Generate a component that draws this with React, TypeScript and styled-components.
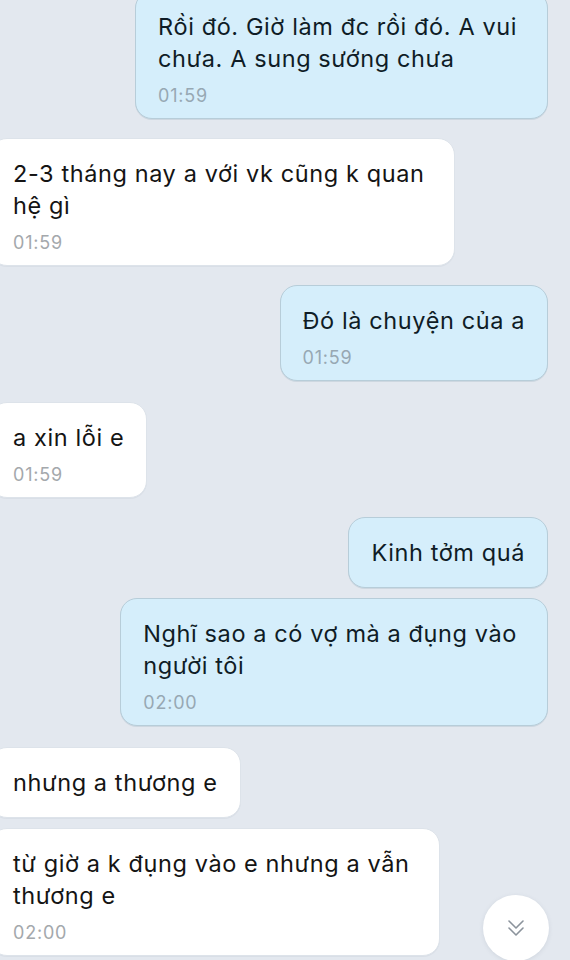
import React from "react";
import styled, { createGlobalStyle } from "styled-components";

const Global = createGlobalStyle`
  html, body {
    margin: 0;
    padding: 0;
    background: #e3e8ef;
    overflow: hidden;
  }
  body {
    width: 570px;
    height: 960px;
    font-family: Inter, Roboto, "Noto Sans", "Liberation Sans", sans-serif;
    -webkit-font-smoothing: antialiased;
  }
`;

const Screen = styled.div`
  position: relative;
  width: 570px;
  height: 960px;
  overflow: hidden;
  background: #e3e8ef;
`;

const MessageList = styled.div`
  display: flex;
  flex-direction: column;
  margin: -9px 22px 0 -10px;
`;

type Side = "in" | "out";

const Bubble = styled.div<{ $side: Side; $gap: number; $hasTime: boolean; $wrapped: boolean }>`
  box-sizing: border-box;
  align-self: ${(p) => (p.$side === "out" ? "flex-end" : "flex-start")};
  width: fit-content;
  margin-top: ${(p) => p.$gap}px;
  padding: 19px ${(p) => (p.$wrapped ? 30 : 22)}px ${(p) => (p.$hasTime ? 11 : 18)}px 22px;
  border-radius: 17px;
  background: ${(p) => (p.$side === "out" ? "#d5eefb" : "#ffffff")};
  border: 1px solid ${(p) => (p.$side === "out" ? "#b7cdd9" : "#dde3ea")};
  box-shadow: 0 1px 0 ${(p) => (p.$side === "out" ? "rgba(140,165,180,0.25)" : "rgba(180,190,200,0.2)")};
`;

const Line = styled.span<{ $side: Side }>`
  display: block;
  white-space: nowrap;
  font-size: 23.5px;
  letter-spacing: 0.6px;
  line-height: 32px;
  color: ${(p) => (p.$side === "out" ? "#0f1c26" : "#141414")};
`;

const Time = styled.div<{ $side: Side }>`
  margin-top: 10px;
  font-size: 18px;
  letter-spacing: 0.8px;
  line-height: 22px;
  color: ${(p) => (p.$side === "out" ? "#97a8b3" : "#a4a8ac")};
`;

const ScrollButton = styled.div`
  position: absolute;
  left: 483px;
  top: 895px;
  width: 66px;
  height: 66px;
  border-radius: 50%;
  background: #ffffff;
  box-shadow: 0 1px 4px rgba(120, 135, 150, 0.18);
  display: flex;
  align-items: center;
  justify-content: center;
`;

const ChevronIcon = () => (
  <svg width="20" height="20" viewBox="0 0 20 20" fill="none">
    <polyline points="3,3 10,10 17,3" stroke="#8b939c" strokeWidth="1.6" strokeLinecap="round" strokeLinejoin="round" />
    <polyline points="3,10 10,17 17,10" stroke="#8b939c" strokeWidth="1.6" strokeLinecap="round" strokeLinejoin="round" />
  </svg>
);

type Msg = { side: Side; lines: string[]; time?: string; gap: number };

const messages: Msg[] = [
  { side: "out", lines: ["Rồi đó. Giờ làm đc rồi đó. A vui", "chưa. A sung sướng chưa"], time: "01:59", gap: 0 },
  { side: "in", lines: ["2-3 tháng nay a với vk cũng k quan", "hệ gì"], time: "01:59", gap: 19 },
  { side: "out", lines: ["Đó là chuyện của a"], time: "01:59", gap: 19 },
  { side: "in", lines: ["a xin lỗi e"], time: "01:59", gap: 21 },
  { side: "out", lines: ["Kinh tởm quá"], gap: 19 },
  { side: "out", lines: ["Nghĩ sao a có vợ mà a đụng vào", "người tôi"], time: "02:00", gap: 10 },
  { side: "in", lines: ["nhưng a thương e"], gap: 21 },
  { side: "in", lines: ["từ giờ a k đụng vào e nhưng a vẫn", "thương e"], time: "02:00", gap: 10 },
];

export default function App() {
  return (
    <>
      <Global />
      <Screen>
        <MessageList>
          {messages.map((m, i) => (
            <Bubble
              key={i}
              $side={m.side}
              $gap={m.gap}
              $hasTime={!!m.time}
              $wrapped={m.lines.length > 1}
            >
              {m.lines.map((l, j) => (
                <Line key={j} $side={m.side}>
                  {l}
                </Line>
              ))}
              {m.time && <Time $side={m.side}>{m.time}</Time>}
            </Bubble>
          ))}
        </MessageList>
        <ScrollButton>
          <ChevronIcon />
        </ScrollButton>
      </Screen>
    </>
  );
}
